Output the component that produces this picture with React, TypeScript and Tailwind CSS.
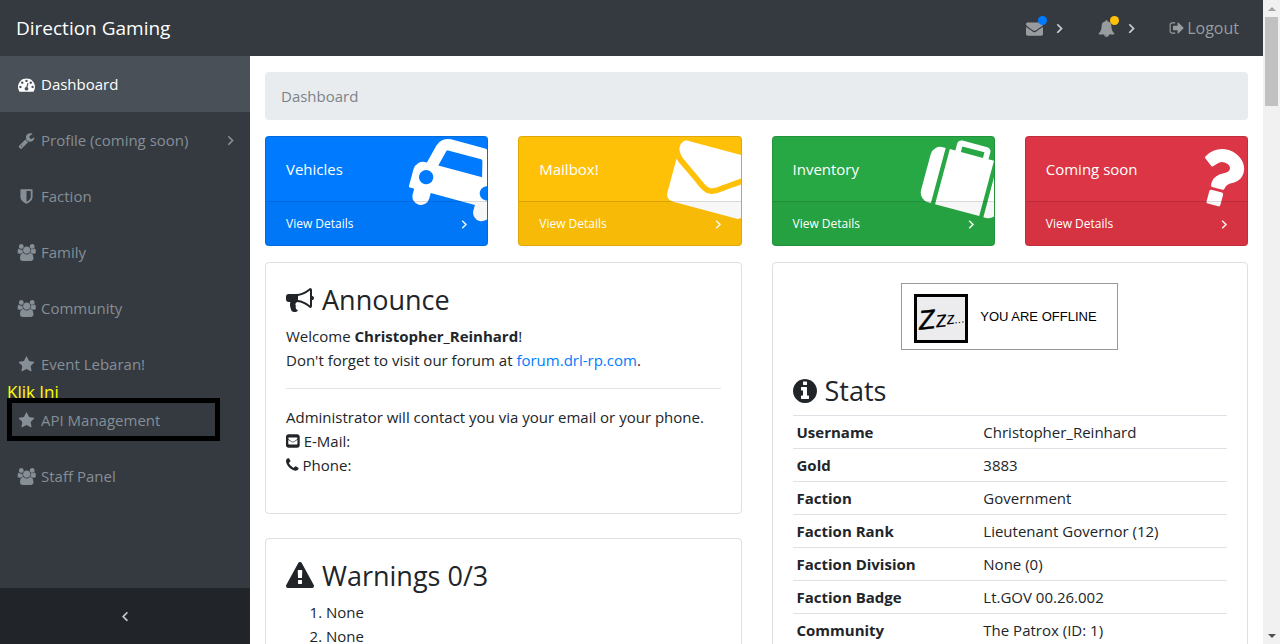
import type { ReactNode } from "react";
import clsx from "clsx";

type Glyph = { w: number; d: string };

const GLYPHS = {
  tachometer: {
    w: 1792,
    d: "M384 1152q0-53-37.5-90.5t-90.5-37.5-90.5 37.5-37.5 90.5 37.5 90.5 90.5 37.5 90.5-37.5 37.5-90.5zm192-448q0-53-37.5-90.5t-90.5-37.5-90.5 37.5-37.5 90.5 37.5 90.5 90.5 37.5 90.5-37.5 37.5-90.5zm428 481l101-382q6-26-7.5-48.5t-38.5-29.5-48 6.5-30 39.5l-101 382q-60 5-107 43.5t-63 98.5q-20 77 20 146t117 89 146-20 89-117q16-60-6-117t-72-91zm660-33q0-53-37.5-90.5t-90.5-37.5-90.5 37.5-37.5 90.5 37.5 90.5 90.5 37.5 90.5-37.5 37.5-90.5zm-640-640q0-53-37.5-90.5t-90.5-37.5-90.5 37.5-37.5 90.5 37.5 90.5 90.5 37.5 90.5-37.5 37.5-90.5zm448 192q0-53-37.5-90.5t-90.5-37.5-90.5 37.5-37.5 90.5 37.5 90.5 90.5 37.5 90.5-37.5 37.5-90.5zm320 448q0 261-141 483-19 29-54 29h-1402q-35 0-54-29-141-221-141-483 0-182 71-348t191-286 286-191 348-71 348 71 286 191 191 286 71 348z",
  },
  wrench: {
    w: 1792,
    d: "M448 1472q0-26-19-45t-45-19-45 19-19 45 19 45 45 19 45-19 19-45zm644-420l-682 682q-37 37-90 37-52 0-91-37l-106-108q-38-36-38-90 0-53 38-91l681-681q39 98 114.5 173.5t173.5 114.5zm634-435q0 39-23 106-47 134-164.5 217.5t-258.5 83.5q-185 0-316.5-131.5t-131.5-316.5 131.5-316.5 316.5-131.5q58 0 121.5 16.5t107.5 46.5q16 11 16 28t-16 28l-293 169v224l193 107q5-3 79-48.5t135.5-81 70.5-35.5q15 0 23.5 10t8.5 25z",
  },
  shield: {
    w: 1792,
    d: "M1344 960v-640h-448v1137q119-63 213-137 235-184 235-360zm192-768v768q0 86-33.5 170.5t-83 150-118 127.5-126.5 103-121 77.5-89.5 49.5-42.5 20q-12 6-26 6t-26-6q-16-7-42.5-20t-89.5-49.5-121-77.5-126.5-103-118-127.5-83-150-33.5-170.5v-768q0-26 19-45t45-19h1152q26 0 45 19t19 45z",
  },
  users: {
    w: 2048,
    d: "M657 896q-162 5-265 128h-134q-82 0-138-40.5t-56-118.5q0-353 124-353 6 0 43.5 21t97.5 42.5 119 21.5q67 0 133-23-5 37-5 66 0 159 81 292zm1071 637q0 120-73 189.5t-194 69.5h-874q-121 0-194-69.5t-73-189.5q0-53 3.5-103.5t14-109 26.5-108.5 43-97.5 62-81 85.5-53.5 111.5-20q10 0 43 21.5t73 48 107 48 135 21.5 135-21.5 107-48 73-48 43-21.5q61 0 111.5 20t85.5 53.5 62 81 43 97.5 26.5 108.5 14 109 3.5 103.5zm-1024-1277q0 106-75 181t-181 75-181-75-75-181 75-181 181-75 181 75 75 181zm704 384q0 159-112.5 271.5t-271.5 112.5-271.5-112.5-112.5-271.5 112.5-271.5 271.5-112.5 271.5 112.5 112.5 271.5zm576 225q0 78-56 118.5t-138 40.5h-134q-103-123-265-128 81-133 81-292 0-29-5-66 66 23 133 23 59 0 119-21.5t97.5-42.5 43.5-21q124 0 124 353zm-128-609q0 106-75 181t-181 75-181-75-75-181 75-181 181-75 181 75 75 181z",
  },
  star: {
    w: 1792,
    d: "M1728 647q0 22-26 48l-363 354 86 500q1 7 1 20 0 21-10.5 35.5t-30.5 14.5q-19 0-40-12l-449-236-449 236q-22 12-40 12-21 0-31.5-14.5t-10.5-35.5q0-6 2-20l86-500-364-354q-25-27-25-48 0-37 56-46l502-73 225-455q19-41 49-41t49 41l225 455 502 73q56 9 56 46z",
  },
  envelope: {
    w: 1792,
    d: "M1792 710v794q0 66-47 113t-113 47h-1472q-66 0-113-47t-47-113v-794q44 49 101 87 362 246 497 345 57 42 92.5 65.5t94.5 48 110 24.5h2q51 0 110-24.5t94.5-48 92.5-65.5q170-123 498-345 57-39 100-87zm0-294q0 79-49 151t-122 123q-376 261-468 325-10 7-42.5 31t-54 38.5-52 32.5-57.5 27-50 9h-2q-23 0-50-9t-57.5-27-52-32.5-54-38.5-42.5-31q-91-64-262-182.5t-205-142.5q-62-42-117-115.5t-55-136.5q0-78 41.5-130t118.5-52h1472q65 0 112.5 47t47.5 113z",
  },
  bell: {
    w: 1792,
    d: "M912 1696q0-16-16-16-59 0-101.5-42.5t-42.5-101.5q0-16-16-16t-16 16q0 73 51.5 124.5t124.5 51.5q16 0 16-16zm816-288q0 52-38 90t-90 38h-448q0 106-75 181t-181 75-181-75-75-181h-448q-52 0-90-38t-38-90q50-42 91-88t85-119.5 74.5-158.5 50-206 19.5-260q0-152 117-282.5t307-158.5q-8-19-8-39 0-40 28-68t68-28 68 28 28 68q0 20-8 39 190 28 307 158.5t117 282.5q0 139 19.5 260t50 206 74.5 158.5 85 119.5 91 88z",
  },
  signOut: {
    w: 1664,
    d: "M704 1440q0 4 1 20t.5 26.5-3 23.5-10 19.5-20.5 6.5h-320q-119 0-203.5-84.5t-84.5-203.5v-704q0-119 84.5-203.5t203.5-84.5h320q13 0 22.5 9.5t9.5 22.5q0 4 1 20t.5 26.5-3 23.5-10 19.5-20.5 6.5h-320q-66 0-113 47t-47 113v704q0 66 47 113t113 47h312l11.5 1 11.5 3 8 5.5 7 9 2 13.5zm928-544q0 26-19 45l-544 544q-19 19-45 19t-45-19-19-45v-288h-448q-26 0-45-19t-19-45v-384q0-26 19-45t45-19h448v-288q0-26 19-45t45-19 45 19l544 544q19 19 19 45z",
  },
  car: {
    w: 2048,
    d: "M480 1088q0-66-47-113t-113-47-113 47-47 113 47 113 113 47 113-47 47-113zm36-320h1016l-89-357q-2-8-14-17.5t-21-9.5h-768q-9 0-21 9.5t-14 17.5zm1372 320q0-66-47-113t-113-47-113 47-47 113 47 113 113 47 113-47 47-113zm160-96v384q0 14-9 23t-23 9h-96v128q0 80-56 136t-136 56-136-56-56-136v-128h-1024v128q0 80-56 136t-136 56-136-56-56-136v-128h-96q-14 0-23-9t-9-23v-384q0-93 65.5-158.5t158.5-65.5h28l105-419q23-94 104-157.5t179-63.5h768q98 0 179 63.5t104 157.5l105 419h28q93 0 158.5 65.5t65.5 158.5z",
  },
  suitcase: {
    w: 1792,
    d: "M640 384h512v-128h-512v128zm-352 0v1280h-64q-92 0-158-66t-66-158v-832q0-92 66-158t158-66h64zm1120 0v1280h-1024v-1280h128v-160q0-40 28-68t68-28h576q40 0 68 28t28 68v160h128zm384 224v832q0 92-66 158t-158 66h-64v-1280h64q92 0 158 66t66 158z",
  },
  question: {
    w: 1792,
    d: "M1088 1256v240q0 16-12 28t-28 12h-240q-16 0-28-12t-12-28v-240q0-16 12-28t28-12h240q16 0 28 12t12 28zm316-600q0 54-15.5 101t-35 76.5-55 59.5-57.5 43.5-61 35.5q-41 23-68.5 65t-27.5 67q0 17-12 32.5t-28 15.5h-240q-15 0-25.5-18.5t-10.5-37.5v-45q0-83 65-156.5t143-108.5q59-27 84-56t25-76q0-42-46.5-74t-107.5-32q-65 0-108 29-35 25-107 115-13 16-31 16-12 0-25-8l-164-125q-13-10-15.5-25t5.5-28q160-266 464-266 80 0 161 31t146 83 106 127.5 41 158.5z",
  },
  bullhorn: {
    w: 1792,
    d: "M1664 640q53 0 90.5 37.5t37.5 90.5-37.5 90.5-90.5 37.5v384q0 52-38 90t-90 38q-417-347-812-380-58 19-91 66t-31 100.5 40 92.5q-20 33-23 65.5t6 58 33.5 55 48 50 61.5 50.5q-29 58-111.5 83t-168.5 11.5-132-55.5q-7-23-29.5-87.5t-32-94.5-23-89-15-101 3.5-98.5 22-110.5h-122q-66 0-113-47t-47-113v-192q0-66 47-113t113-47h480q435 0 896-384 52 0 90 38t38 90v384zm-128 604v-954q-394 302-768 343v270q377 42 768 341z",
  },
  warning: {
    w: 1792,
    d: "M1024 1375v-190q0-14-9.5-23.5t-22.5-9.5h-192q-13 0-22.5 9.5t-9.5 23.5v190q0 14 9.5 23.5t22.5 9.5h192q13 0 22.5-9.5t9.5-23.5zm-2-374l18-459q0-12-10-19-13-11-24-11h-220q-11 0-24 11-10 7-10 21l17 457q0 10 10 16.5t24 6.5h185q14 0 23.5-6.5t10.5-16.5zm-14-934l768 1408q35 63-2 126-17 29-46.5 46t-63.5 17h-1536q-34 0-63.5-17t-46.5-46q-37-63-2-126l768-1408q17-31 47-49t65-18 65 18 47 49z",
  },
  info: {
    w: 1536,
    d: "M1024 1376v-160q0-14-9-23t-23-9h-96v-512q0-14-9-23t-23-9h-320q-14 0-23 9t-9 23v160q0 14 9 23t23 9h96v320h-96q-14 0-23 9t-9 23v160q0 14 9 23t23 9h448q14 0 23-9t9-23zm-128-896v-160q0-14-9-23t-23-9h-192q-14 0-23 9t-9 23v160q0 14 9 23t23 9h192q14 0 23-9t9-23zm640 416q0 209-103 385.5t-279.5 279.5-385.5 103-385.5-103-279.5-279.5-103-385.5 103-385.5 279.5-279.5 385.5-103 385.5 103 279.5 279.5 103 385.5z",
  },
  phone: {
    w: 1408,
    d: "M1408 1240q0 27-10 70.5t-21 68.5q-21 50-122 106-94 51-186 51-27 0-53-3.5t-57.5-12.5-47-14.5-55.5-20.5-49-18q-98-35-175-83-127-79-264-216t-216-264q-48-77-83-175-3-9-18-49t-20.5-55.5-14.5-47-12.5-57.5-3.5-53q0-92 51-186 56-101 106-122 25-11 68.5-21t70.5-10q14 0 21 3 18 6 53 76 11 19 30 54t35 63.5 31 53.5q3 4 17.5 25t21.5 35.5 7 28.5q0 20-28.5 50t-62 55-62 53-28.5 46q0 9 5 22.5t8.5 20.5 14 24 11.5 19q76 137 174 235t235 174q2 1 19 11.5t24 14 20.5 8.5 22.5 5q18 0 46-28.5t53-62 55-62 50-28.5q14 0 28.5 7t35.5 21.5 25 17.5q25 15 53.5 31t63.5 35 54 30q70 35 76 53 3 7 3 21z",
  },
  envelopeSquare: {
    w: 1536,
    d: "M1248 128q119 0 203.500 84.500t84.500 203.500v960q0 119-84.500 203.500t-203.500 84.500h-960q-119 0-203.500-84.500t-84.500-203.500v-960q0-119 84.500-203.500t203.500-84.500h960zm32 1056v-436q-31 35-64 55-34 22-132.500 85t-151.500 99q-98 69-164 69t-164-69q-46-32-141.500-92.500t-142.500-92.500q-12-8-33-27t-31-27v436q0 40 28 68t68 28h832q40 0 68-28t28-68zm0-573q0-41-27.500-70t-68.500-29h-832q-40 0-68 28t-28 68q0 37 30.500 76.500t67.500 64.500q47 32 137.500 89t129.500 83q3 2 17 11.500t21 14 21 13 23.500 13 21.500 9.500 22.500 7.500 20.500 2.500 20.500-2.500 22.500-7.500 21.500-9.500 23.500-13 21-13 21-14 17-11.500l267-174q35-23 66.500-62.500t31.500-73.500z",
  },
  angleRight: {
    w: 640,
    d: "M595 960q0 13-10 23l-466 466q-10 10-23 10t-23-10l-50-50q-10-10-10-23t10-23l393-393-393-393q-10-10-10-23t10-23l50-50q10-10 23-10t23 10l466 466q10 10 10 23z",
  },
  angleLeft: {
    w: 640,
    d: "M627 544q0 13-10 23l-393 393 393 393q10 10 10 23t-10 23l-50 50q-10 10-23 10t-23-10l-466-466q-10-10-10-23t10-23l466-466q10-10 23-10t23 10l50 50q10 10 10 23z",
  },
} satisfies Record<string, Glyph>;

type IconName = keyof typeof GLYPHS;

function Icon({ name, className = "h-4" }: { name: IconName; className?: string }) {
  const { w, d } = GLYPHS[name];
  return (
    <svg
      viewBox={`0 0 ${w} 1792`}
      className={clsx("w-auto shrink-0 overflow-visible", className)}
      fill="currentColor"
      stroke="currentColor"
      strokeWidth={name.startsWith("angle") ? 60 : 0}
      aria-hidden="true"
    >
      <path d={d} />
    </svg>
  );
}

const NAV: { icon: IconName; label: string; active?: boolean; more?: boolean; marked?: boolean }[] = [
  { icon: "tachometer", label: "Dashboard", active: true },
  { icon: "wrench", label: "Profile (coming soon)", more: true },
  { icon: "shield", label: "Faction" },
  { icon: "users", label: "Family" },
  { icon: "users", label: "Community" },
  { icon: "star", label: "Event Lebaran!" },
  { icon: "star", label: "API Management", marked: true },
  { icon: "users", label: "Staff Panel" },
];

const TILES: { icon: IconName; label: string; color: string }[] = [
  { icon: "car", label: "Vehicles", color: "bg-[#007bff]" },
  { icon: "envelope", label: "Mailbox!", color: "bg-[#ffc107]" },
  { icon: "suitcase", label: "Inventory", color: "bg-[#28a745]" },
  { icon: "question", label: "Coming soon", color: "bg-[#dc3545]" },
];

const STATS = [
  ["Username", "Christopher_Reinhard"],
  ["Gold", "3883"],
  ["Faction", "Government"],
  ["Faction Rank", "Lieutenant Governor (12)"],
  ["Faction Division", "None (0)"],
  ["Faction Badge", "Lt.GOV 00.26.002"],
  ["Community", "The Patrox (ID: 1)"],
];

function Navbar() {
  return (
    <header className="flex h-14 shrink-0 items-center justify-between bg-[#343a40] pr-6 pl-4">
      <a href="#" className="text-[19px] text-white">
        Direction Gaming
      </a>
      <nav className="flex items-center gap-[35px] text-[#999c9f]">
        <button type="button" aria-label="Messages" className="relative flex items-center gap-[14px]">
          <Icon name="envelope" className="h-[17px]" />
          <span className="absolute -top-1 left-3 size-[9px] rounded-full bg-[#007bff]" />
          <Icon name="angleRight" className="h-4 text-[#ced4da]" />
        </button>
        <button type="button" aria-label="Alerts" className="relative flex items-center gap-[14px]">
          <Icon name="bell" className="h-[17px]" />
          <span className="absolute -top-1 left-3 size-[9px] rounded-full bg-[#ffc107]" />
          <Icon name="angleRight" className="h-4 text-[#ced4da]" />
        </button>
        <a href="#" className="flex items-center gap-[3px] text-base">
          <Icon name="signOut" />
          Logout
        </a>
      </nav>
    </header>
  );
}

function Sidebar() {
  return (
    <aside className="flex w-[250px] shrink-0 flex-col bg-[#343a40]">
      <ul className="flex-1">
        {NAV.map((item) => (
          <li key={item.label} className="relative">
            <a
              href="#"
              className={clsx(
                "flex h-14 items-center gap-1 pr-4 pl-4",
                item.active ? "bg-[#495057] text-white" : "text-[#868e96]"
              )}
            >
              <span className="flex w-[21px] justify-center">
                <Icon name={item.icon} className="h-[17px]" />
              </span>
              <span className="flex-1">{item.label}</span>
              {item.more && <Icon name="angleRight" className="h-4" />}
            </a>
            {item.marked && (
              <>
                <span className="absolute -top-3 left-[7px] text-[17px]/6 text-[#ffff00]">Klik Ini</span>
                <span className="absolute top-[6px] left-[7px] h-[43px] w-[213px] border-[5px] border-black" />
              </>
            )}
          </li>
        ))}
      </ul>
      <button
        type="button"
        aria-label="Collapse sidebar"
        className="flex h-14 items-center justify-center bg-[#212529] text-[#ced4da]"
      >
        <Icon name="angleLeft" />
      </button>
    </aside>
  );
}

function Tile({ icon, label, color }: { icon: IconName; label: string; color: string }) {
  return (
    <div
      className={clsx(
        "relative overflow-hidden rounded border border-black/[.125] text-white",
        color
      )}
    >
      <div className="absolute top-0 -right-[23px] flex w-[102px] rotate-15 justify-center">
        <Icon name={icon} className="h-20" />
      </div>
      <div className="relative p-5">{label}</div>
      <a
        href="#"
        className="relative flex items-center justify-between border-t border-black/[.125] bg-black/[.03] px-5 py-3 text-[12px]/[19px] font-medium"
      >
        View Details
        <Icon name="angleRight" className="h-[14px]" />
      </a>
    </div>
  );
}

function Card({ children }: { children: ReactNode }) {
  return <section className="rounded border border-black/[.125] p-5">{children}</section>;
}

function CardTitle({ icon, children }: { icon: IconName; children: ReactNode }) {
  return (
    <h3 className="mb-2 flex items-center gap-2 text-[27px]/[33px] font-medium">
      <Icon name={icon} className="h-7" />
      {children}
    </h3>
  );
}

function OfflineBadge() {
  return (
    <div className="mx-auto mb-6 flex h-[67px] w-[217px] items-center gap-3 border border-[#999] pl-3">
      <svg width="54" height="49" viewBox="0 0 54 49" role="img" aria-label="Sleeping" className="mt-1">
        <rect x="1.500" y="1.500" width="51" height="46" fill="#ececef" stroke="#000" strokeWidth="3" />
        <g fontFamily="Liberation Sans, Arial, sans-serif" fontStyle="italic" fill="#000">
          <text x="5" y="35" fontSize="27" stroke="#000" strokeWidth="0.5" transform="rotate(-6 12 30)">
            Z
          </text>
          <text x="22" y="33" fontSize="23" transform="rotate(-6 27 30)">
            z
          </text>
          <text x="33" y="30" fontSize="17" transform="rotate(-6 38 30)">
            z
          </text>
          <text x="41" y="29" fontSize="12" transform="rotate(-6 46 29)">
            ...
          </text>
        </g>
      </svg>
      <span className="font-['Liberation_Sans',Arial,sans-serif] text-[13px] text-black">YOU ARE OFFLINE</span>
    </div>
  );
}

function Scrollbar() {
  return (
    <div className="flex w-[17px] shrink-0 flex-col items-center justify-between bg-[#f1f1f1]">
      <div className="flex w-full flex-col items-center">
        <span className="flex h-[17px] items-center">
          <svg width="8" height="4" viewBox="0 0 8 4">
            <path d="M0 4L4 0L8 4Z" fill="#a3a3a3" />
          </svg>
        </span>
        <span className="h-[89px] w-[13px] bg-[#c1c1c1]" />
      </div>
      <span className="flex h-[17px] items-center">
        <svg width="8" height="4" viewBox="0 0 8 4">
          <path d="M0 0L4 4L8 0Z" fill="#505050" />
        </svg>
      </span>
    </div>
  );
}

export default function App() {
  return (
    <div className="flex h-screen overflow-hidden bg-white font-['Segoe_UI','Open_Sans','Noto_Sans',sans-serif] text-[15px]/6 text-[#212529]">
      <div className="flex min-w-0 flex-1 flex-col">
        <Navbar />
        <div className="flex min-h-0 flex-1">
          <Sidebar />
          <main className="min-w-0 flex-1 overflow-hidden px-[15px] pt-4">
            <ol className="mb-4 rounded bg-[#e9ecef] px-4 py-3 text-[#7b838a]">
              <li>Dashboard</li>
            </ol>
            <div className="mb-4 grid grid-cols-4 gap-[30px]">
              {TILES.map((tile) => (
                <Tile key={tile.label} {...tile} />
              ))}
            </div>
            <div className="grid grid-cols-2 items-start gap-[30px]">
              <div className="flex flex-col gap-6">
                <Card>
                  <CardTitle icon="bullhorn">Announce</CardTitle>
                  <p>
                    Welcome <b>Christopher_Reinhard</b>!
                    <br />
                    Don't forget to visit our forum at{" "}
                    <a href="#" className="text-[#007bff]">
                      forum.drl-rp.com
                    </a>
                    .
                  </p>
                  <hr className="my-4 border-black/10" />
                  <div className="mb-4">
                    <p>Administrator will contact you via your email or your phone.</p>
                    <p className="flex items-center gap-1">
                      <Icon name="envelopeSquare" />
                      E-Mail:
                    </p>
                    <p className="flex items-center gap-1">
                      <Icon name="phone" />
                      Phone:
                    </p>
                  </div>
                </Card>
                <Card>
                  <CardTitle icon="warning">Warnings 0/3</CardTitle>
                  <ol className="list-decimal pl-10">
                    <li>None</li>
                    <li>None</li>
                  </ol>
                </Card>
              </div>
              <Card>
                <OfflineBadge />
                <CardTitle icon="info">Stats</CardTitle>
                <table className="w-full table-fixed text-left">
                  <tbody>
                    {STATS.map(([name, value]) => (
                      <tr key={name} className="border-t border-[#dee2e6]">
                        <th scope="row" className="w-[43%] p-1 font-bold">
                          {name}
                        </th>
                        <td className="p-1">{value}</td>
                      </tr>
                    ))}
                  </tbody>
                </table>
              </Card>
            </div>
          </main>
        </div>
      </div>
      <Scrollbar />
    </div>
  );
}
